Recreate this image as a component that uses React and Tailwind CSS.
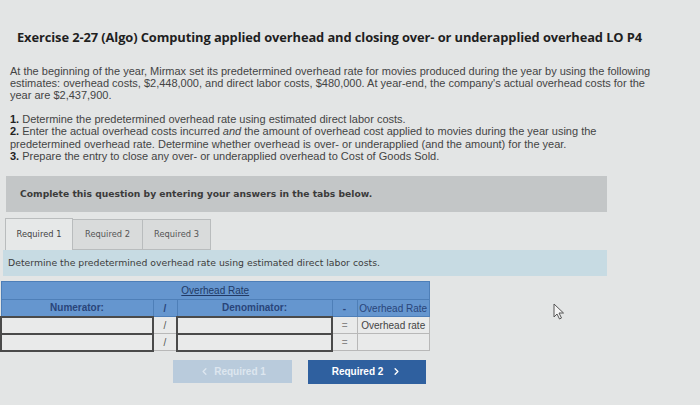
import { ChevronLeft, ChevronRight } from 'lucide-react';

const SANS = { fontFamily: '"Liberation Sans", Arial, sans-serif' };
const VERD = { fontFamily: '"DejaVu Sans", Verdana, sans-serif' };

function Cursor() {
  return (
    <svg className="absolute left-[553px] top-[303px]" width="12" height="17" viewBox="0 0 12 17">
      <path d="M1 1 L1 14 L4 11 L6.5 16 L8.5 15 L6 10 L10.5 10 Z" fill="#f4f4f4" stroke="#555" strokeWidth="1" strokeLinejoin="round" />
    </svg>
  );
}

export default function App() {
  return (
    <div className="relative w-[700px] h-[405px] overflow-hidden bg-[#e3e5e5] text-[#3a3a3a]" style={SANS}>
      <h1 className="pl-[17px] pt-[29px] text-[12.9px] font-bold text-[#1f1f1f] leading-[16px] tracking-[-0.1px]" style={{ fontFamily: '"Open Sans", sans-serif' }}>
        Exercise 2-27 (Algo) Computing applied overhead and closing over- or underapplied overhead LO P4
      </h1>

      <p className="pl-[10px] pr-[35px] mt-[20px] text-[11px] leading-[12px] text-[#444]">
        At the beginning of the year, Mirmax set its predetermined overhead rate for movies produced during the year by using the following estimates: overhead costs, $2,448,000, and direct labor costs, $480,000. At year-end, the company's actual overhead costs for the year are $2,437,900.
      </p>

      <div className="pl-[10px] pr-[85px] mt-[12px] text-[11px] leading-[12.3px] text-[#444]">
        <p><b className="text-[#222]">1.</b> Determine the predetermined overhead rate using estimated direct labor costs.</p>
        <p><b className="text-[#222]">2.</b> Enter the actual overhead costs incurred <i>and</i> the amount of overhead cost applied to movies during the year using the predetermined overhead rate. Determine whether overhead is over- or underapplied (and the amount) for the year.</p>
        <p><b className="text-[#222]">3.</b> Prepare the entry to close any over- or underapplied overhead to Cost of Goods Sold.</p>
      </div>

      <div className="ml-[6px] w-[601px] h-[36px] mt-[14px] bg-[#c3c6c7] flex items-center pl-[14px] text-[9.2px] font-bold text-[#3b3b3b]" style={VERD}>
        Complete this question by entering your answers in the tabs below.
      </div>

      <div className="ml-[5px] mt-[6px] flex items-end h-[32px]" style={VERD}>
        <div className="w-[68px] h-[32px] flex items-center justify-center border border-b-0 border-[#b9bcbd] bg-[#e6e8e8] text-[8.3px] text-[#444]">Required 1</div>
        <div className="w-[70px] h-[31px] flex items-center justify-center border border-l-0 border-[#b9bcbd] bg-[#d9dbdb] text-[8.3px] text-[#555]">Required 2</div>
        <div className="w-[68px] h-[31px] flex items-center justify-center border border-l-0 border-[#b9bcbd] bg-[#d9dbdb] text-[8.3px] text-[#555]">Required 3</div>
      </div>

      <div className="ml-[3px] w-[604px] h-[26px] bg-[#c7dbe3] flex items-center pl-[5px] text-[9.3px] text-[#3c3c3c]" style={VERD}>
        Determine the predetermined overhead rate using estimated direct labor costs.
      </div>

      <table className="mt-[5px] w-[430px] border-collapse text-[10px]" style={SANS}>
        <thead>
          <tr className="h-[18px] bg-[#6596cf]">
            <th colSpan={5} className="font-normal text-[#213a66] border border-[#4e7fb8]">
              <span className="underline">Overhead Rate</span>
            </th>
          </tr>
          <tr className="h-[17px] bg-[#6596cf] font-bold text-[#29457a]">
            <th className="w-[152px] border border-[#4e7fb8]">Numerator:</th>
            <th className="w-[24px] border border-[#4e7fb8]">/</th>
            <th className="w-[155px] border border-[#4e7fb8]">Denominator:</th>
            <th className="w-[25px] border border-[#4e7fb8]">-</th>
            <th className="border border-[#4e7fb8] font-normal">Overhead Rate</th>
          </tr>
        </thead>
        <tbody className="bg-[#e9eaea] text-[#555]">
          <tr className="h-[17px]">
            <td className="border-2 border-[#4a4a4a]"></td>
            <td className="border border-[#b8b8b8] text-center">/</td>
            <td className="border-2 border-[#4a4a4a]"></td>
            <td className="border border-[#b8b8b8] text-center text-[#888]">=</td>
            <td className="border border-[#b8b8b8] text-center text-[#444]">Overhead rate</td>
          </tr>
          <tr className="h-[17px]">
            <td className="border-2 border-[#4a4a4a]"></td>
            <td className="border border-[#b8b8b8] text-center">/</td>
            <td className="border-2 border-[#4a4a4a]"></td>
            <td className="border border-[#b8b8b8] text-center text-[#888]">=</td>
            <td className="border border-[#b8b8b8]"></td>
          </tr>
        </tbody>
      </table>

      <div className="mt-[8px] ml-[173px] flex gap-[16px]" style={SANS}>
        <div className="w-[119px] h-[23px] bg-[#b9cbdc] flex items-center justify-center gap-[4px] text-[10px] font-bold text-[#dde6ef]">
          <ChevronLeft size={11} strokeWidth={3} />
          <span>Required 1</span>
        </div>
        <div className="w-[118px] h-[24px] bg-[#2f609f] flex items-center justify-center gap-[8px] text-[10px] font-bold text-white">
          <span>Required 2</span>
          <ChevronRight size={11} strokeWidth={3} />
        </div>
      </div>

      <Cursor />
    </div>
  );
}
